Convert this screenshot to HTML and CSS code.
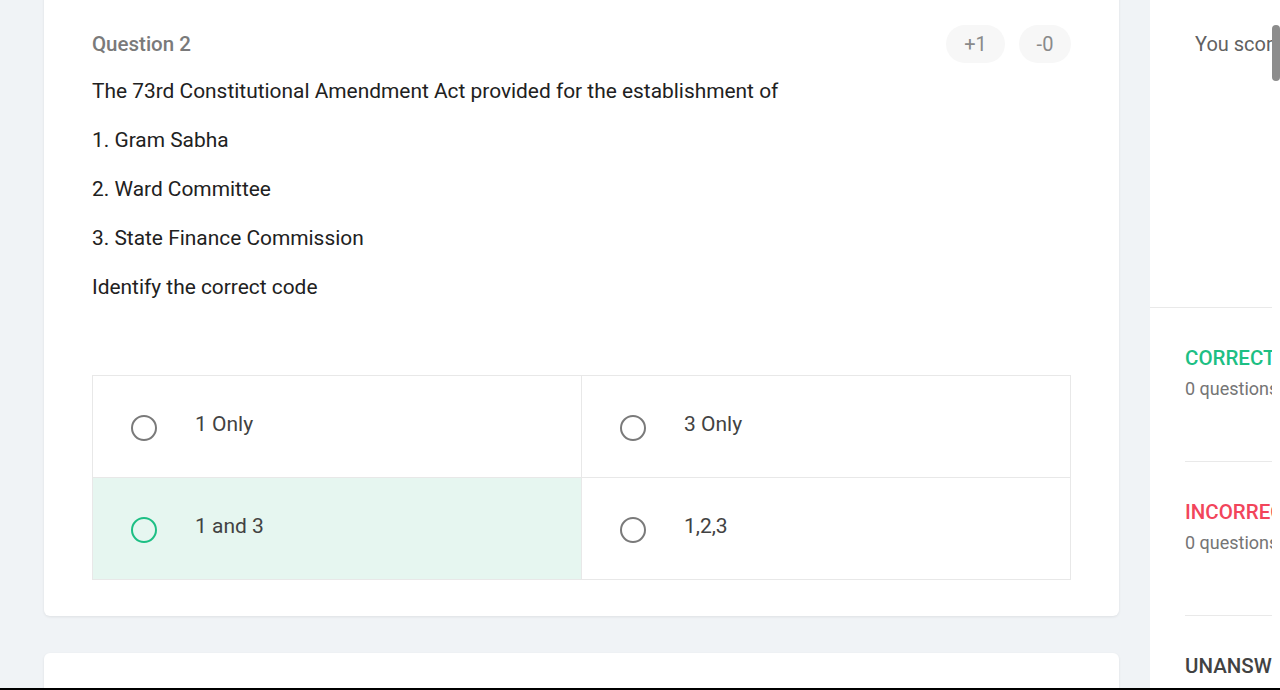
FILE: index.html
```html
<!DOCTYPE html>
<html>
<head>
<meta charset="utf-8">
<link rel="stylesheet" href="styles.css">
</head>
<body>
<div class="page">
  <main class="main">
    <section class="card">
      <div class="q-head">
        <span class="q-num">Question 2</span>
        <div class="marks">
          <span class="mark mark-plus">+1</span>
          <span class="mark mark-minus">-0</span>
        </div>
      </div>
      <div class="q-body">
        <p>The 73rd Constitutional Amendment Act provided for the establishment of</p>
        <p>1. Gram Sabha</p>
        <p>2. Ward Committee</p>
        <p>3. State Finance Commission</p>
        <p>Identify the correct code</p>
      </div>
      <div class="options">
        <div class="option"><span class="radio"></span><span class="opt-text">1 Only</span></div>
        <div class="option"><span class="radio"></span><span class="opt-text">3 Only</span></div>
        <div class="option correct"><span class="radio"></span><span class="opt-text">1 and 3</span></div>
        <div class="option"><span class="radio"></span><span class="opt-text">1,2,3</span></div>
      </div>
    </section>
    <section class="card card-next"></section>
  </main>
  <aside class="side">
    <div class="side-score">You scored</div>
    <div class="side-stats">
      <div class="stat">
        <div class="stat-title green">CORRECT</div>
        <div class="stat-sub">0 questions</div>
      </div>
      <div class="stat">
        <div class="stat-title red">INCORRECT</div>
        <div class="stat-sub">0 questions</div>
      </div>
      <div class="stat">
        <div class="stat-title dark">UNANSWERED</div>
        <div class="stat-sub">0 questions</div>
      </div>
    </div>
  </aside>
  <div class="scrollbar"><div class="thumb"></div></div>
</div>
<div class="bottom-line"></div>
</body>
</html>
```

FILE: styles.css
```css
* { box-sizing: border-box; }
html, body {
  margin: 0;
  height: 100%;
  overflow: hidden;
}
body {
  background: #f0f3f6;
  font-family: Roboto, "Noto Sans", sans-serif;
  color: #212121;
}
.page {
  display: flex;
  height: 690px;
  overflow: hidden;
  padding-left: 44px;
}
.main {
  width: 1075px;
  flex: none;
  margin-top: -30px;
  display: flex;
  flex-direction: column;
  gap: 37px;
}
.card {
  background: #fff;
  border-radius: 6px;
  box-shadow: 0 1px 3px rgba(0,0,0,0.08);
  padding: 48px 48px 36px 48px;
}
.card-next {
  height: 60px;
  flex: none;
}
.q-head {
  display: flex;
  justify-content: space-between;
  align-items: center;
  height: 38px;
  margin-top: 7px;
}
.q-num {
  font-size: 20.5px;
  font-weight: 500;
  color: #7a7a7a;
}
.marks {
  display: flex;
  gap: 14px;
}
.mark {
  height: 38px;
  border-radius: 19px;
  background: #f7f7f7;
  color: #8a8a8a;
  font-size: 20px;
  display: flex;
  align-items: center;
  justify-content: center;
}
.mark-plus { width: 59px; }
.mark-minus { width: 52px; }
.q-body {
  margin-top: 14px;
  font-size: 20.9px;
  color: #212121;
}
.q-body p {
  margin: 0 0 20px 0;
  line-height: 29px;
}
.options {
  margin-top: 73px;
  display: grid;
  grid-template-columns: 1fr 1fr;
  border-top: 1px solid #e8e8e8;
  border-left: 1px solid #e8e8e8;
}
.option {
  height: 102px;
  display: flex;
  align-items: center;
  border-right: 1px solid #e8e8e8;
  border-bottom: 1px solid #e8e8e8;
  padding-left: 38px;
}
.option.correct { background: #e6f6f0; }
.radio {
  width: 26px;
  height: 26px;
  border: 2px solid #7a7a7a;
  border-radius: 50%;
  flex: none;
  margin-top: 2px;
}
.option.correct .radio { border-color: #1dbf84; }
.opt-text {
  margin-left: 38px;
  font-size: 21px;
  color: #424242;
  margin-bottom: 6px;
}
.side {
  margin-left: 31px;
  width: 122px;
  flex: none;
  background: #fff;
  overflow: hidden;
  white-space: nowrap;
}
.side-score {
  height: 308px;
  padding: 32px 0 0 45px;
  font-size: 20px;
  color: #616161;
  border-bottom: 1px solid #e9e9e9;
}
.side-stats {
  padding-left: 35px;
}
.stat {
  height: 154px;
  padding-top: 38px;
  border-bottom: 1px solid #e9e9e9;
}
.stat-title {
  font-size: 20.5px;
  font-weight: 500;
}
.green { color: #1dbf84; }
.red { color: #f2455b; }
.dark { color: #424242; }
.stat-sub {
  margin-top: 8px;
  font-size: 18px;
  color: #757575;
}
.scrollbar {
  width: 8px;
  flex: none;
  background: #fff;
  padding-top: 25px;
}
.thumb {
  height: 56px;
  background: #8c8c8c;
  border-radius: 4px;
}
.bottom-line {
  position: fixed;
  left: 0;
  right: 0;
  bottom: 0;
  height: 2px;
  background: #000;
}
```
